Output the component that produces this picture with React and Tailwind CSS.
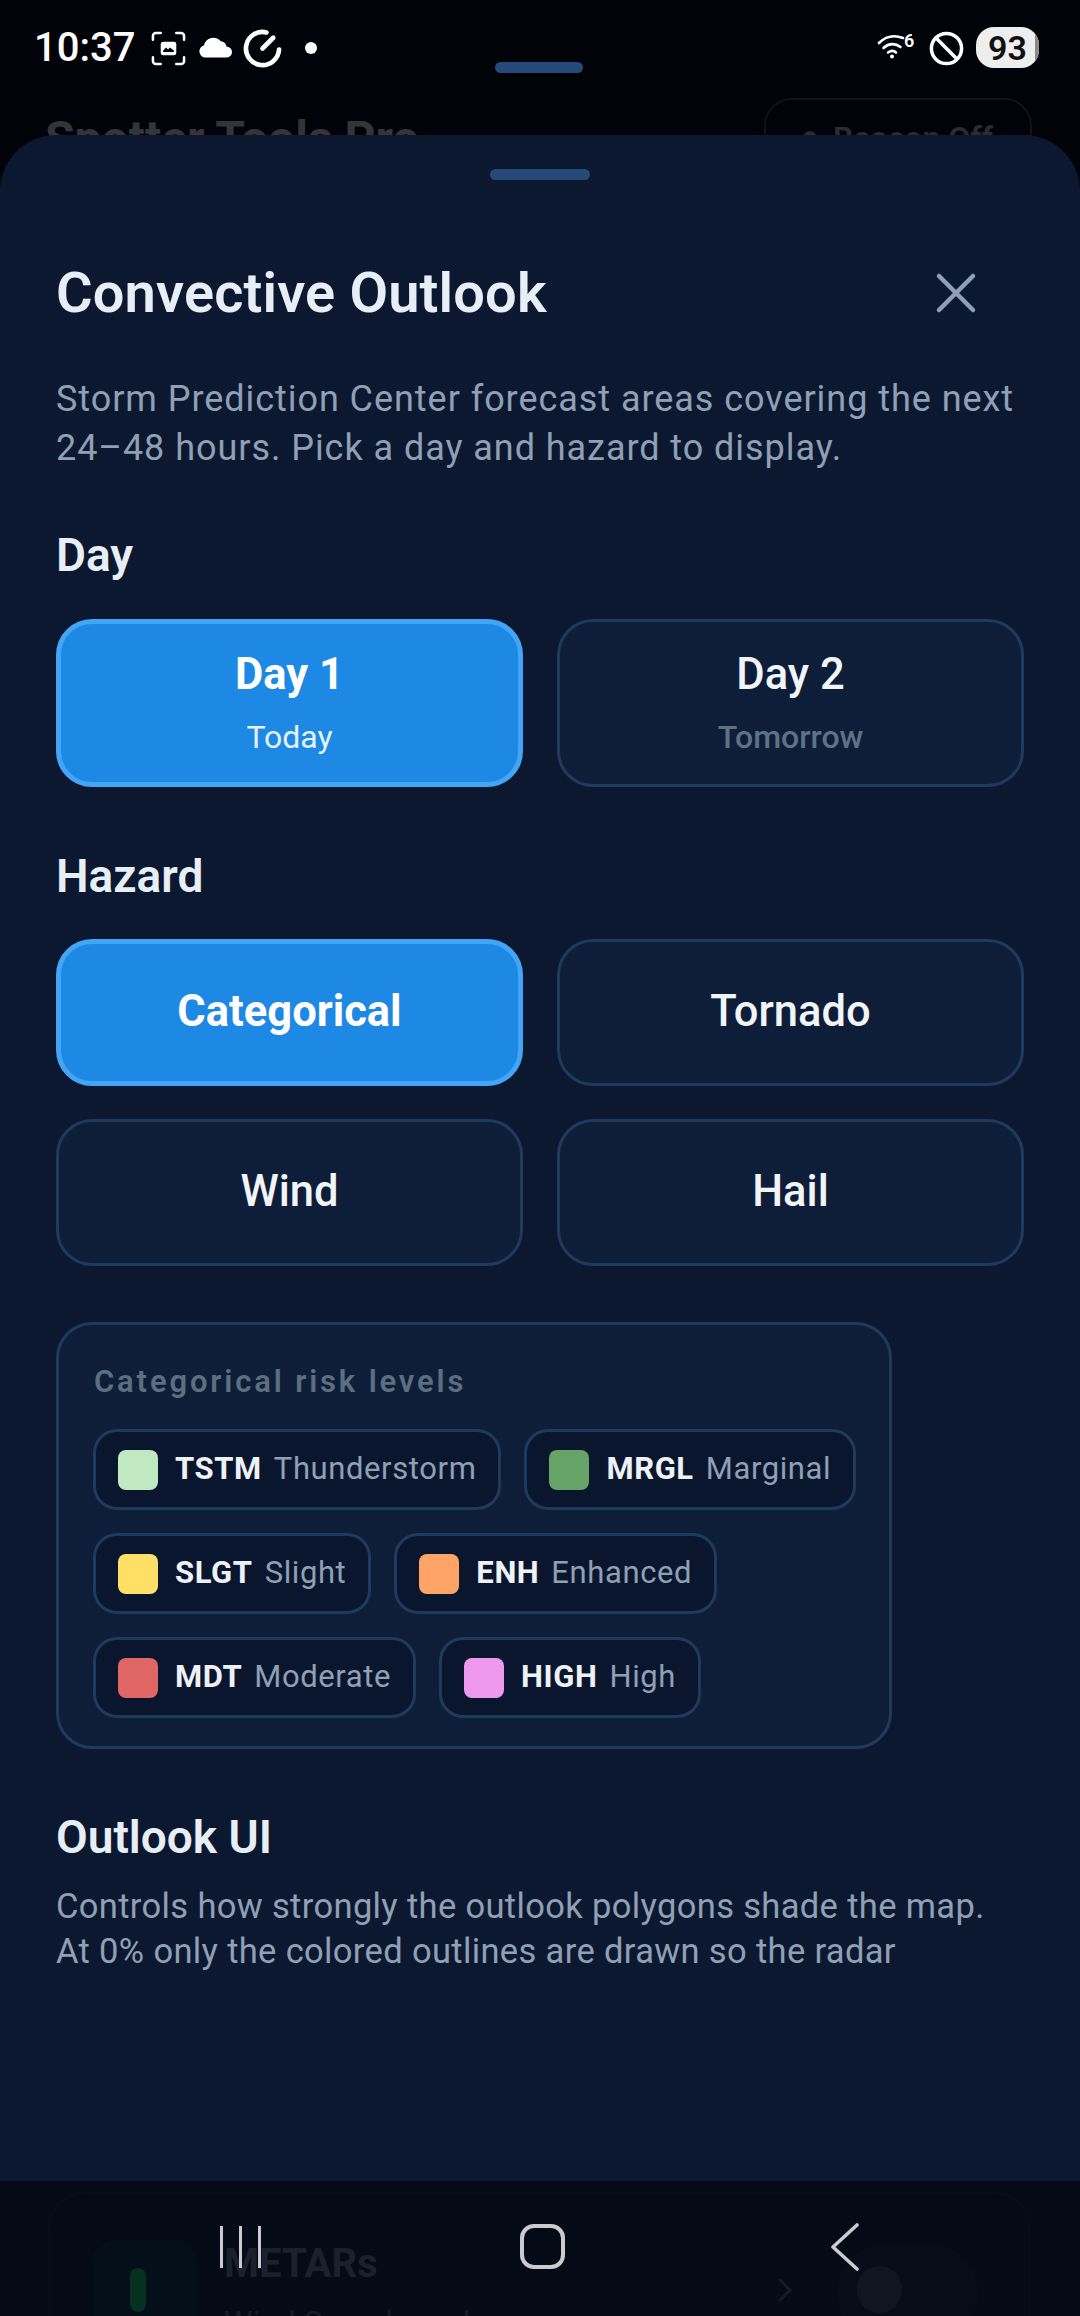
import React from 'react';

const hazards = ['Categorical', 'Tornado', 'Wind', 'Hail'];

const levels = [
  [
    { code: 'TSTM', name: 'Thunderstorm', color: 'bg-[#c1e9c1]' },
    { code: 'MRGL', name: 'Marginal', color: 'bg-[#66a366]' },
  ],
  [
    { code: 'SLGT', name: 'Slight', color: 'bg-[#ffe066]' },
    { code: 'ENH', name: 'Enhanced', color: 'bg-[#ffa366]' },
  ],
  [
    { code: 'MDT', name: 'Moderate', color: 'bg-[#e06666]' },
    { code: 'HIGH', name: 'High', color: 'bg-[#ee99ee]' },
  ],
];

function StatusBar() {
  return (
    <div className="relative h-[135px] shrink-0">
      {/* ghost of the page behind the sheet */}
      <div className="absolute left-[45px] top-[111px] text-[48px] leading-[56px] font-bold text-[#333538]">Spotter Tools Pro</div>
      <div className="absolute left-[764px] top-[98px] w-[268px] h-[80px] rounded-[28px] border-2 border-[#121316] flex items-center justify-center text-[32px] font-semibold text-[#2a2c30]">
        <span className="w-[14px] h-[14px] rounded-full bg-[#2a2c30] mr-[16px]" />
        Beacon Off
      </div>
      <div className="absolute left-[495px] top-[62px] w-[88px] h-[11px] rounded-full bg-[#234a7a]" />

      <div className="absolute left-[34px] top-[25px] text-[40px] leading-[46px] font-medium text-white">10:37</div>
      <svg className="absolute left-[151px] top-[31px]" width="35" height="35" viewBox="0 0 36 36" fill="none" stroke="#fff" strokeWidth="2.600" strokeLinecap="round">
        <path d="M2 9V5a3 3 0 0 1 3-3h5M26 2h5a3 3 0 0 1 3 3v4M34 27v4a3 3 0 0 1-3 3h-5M10 34H5a3 3 0 0 1-3-3v-4" />
        <rect x="10" y="11" width="16" height="14" rx="2.500" fill="#fff" stroke="none" />
        <path d="M12.500 20l3-3 2 2 2-2 4 3v1.500h-11z" fill="#020308" stroke="none" />
      </svg>
      <svg className="absolute left-[198px] top-[37px]" width="36" height="21" viewBox="0 0 36 22" fill="#fff">
        <path d="M7 21.500a6.500 6.500 0 0 1-1.500-12.800A10 10 0 0 1 23 4.500a7 7 0 0 1 6 5.500A5.800 5.800 0 0 1 30 21.500z" />
      </svg>
      <svg className="absolute left-[243px] top-[29px]" width="39" height="39" viewBox="0 0 40 40" fill="none" stroke="#fff" strokeWidth="4.800" strokeLinecap="round">
        <path d="M24 3.500A17 17 0 1 0 37 21" />
        <path d="M20 20l11-11" />
      </svg>
      <div className="absolute left-[305px] top-[42px] w-[12px] h-[12px] rounded-full bg-white" />

      <svg className="absolute left-[877px] top-[33px]" width="30" height="26" viewBox="0 0 30 26" fill="none" stroke="#fff" strokeWidth="2.600" strokeLinecap="round">
        <path d="M2 10C9 3 18 2 26 5" />
        <path d="M6.500 15c5-5 12-5 17-1" />
        <path d="M11 19.500c3-2 6-2 8 0" />
        <circle cx="15" cy="23.500" r="2" fill="#fff" stroke="none" />
      </svg>
      <div className="absolute left-[904px] top-[31px] text-[18px] leading-[20px] font-semibold text-white">6</div>
      <svg className="absolute left-[929px] top-[31px]" width="35" height="35" viewBox="0 0 36 36" fill="none" stroke="#fff" strokeWidth="3.600">
        <circle cx="18" cy="18" r="15.500" />
        <path d="M7 7l22 22" />
      </svg>
      <div className="absolute left-[976px] top-[27px] w-[63px] h-[41px] rounded-[18px] bg-[#eeeeee] overflow-hidden flex items-center justify-center text-[34px] leading-none font-semibold text-[#111]">
        93
        <div className="absolute right-0 top-0 bottom-0 w-[4px] bg-[#8a8a8a]" />
      </div>
    </div>
  );
}

function OptionButton({ active, title, subtitle, tall }) {
  return (
    <button
      className={
        'flex flex-col items-center justify-center rounded-[36px] ' +
        (tall ? 'h-[168px] ' : 'h-[147px] pb-[2px] ') +
        (active ? 'border-[5px] border-[#42a5f5] bg-[#1e88e5]' : 'border-[3px] border-[#1e3a5f] bg-[#0f1e38]')
      }
    >
      <span className={'text-[43.500px] leading-[50px] ' + (tall ? '-mt-[1px] ' : '') + (active ? 'font-bold text-white' : 'font-medium text-[#f1f5f9]')}>{title}</span>
      {subtitle && (
        <span className={'mt-[19px] text-[32px] leading-[36px] ' + (active ? 'text-[#e3f2fd]' : 'font-medium text-[#5f7285]')}>{subtitle}</span>
      )}
    </button>
  );
}

function Chip({ code, name, color }) {
  return (
    <div className="h-[81px] flex items-center pl-[22px] pr-[22px] rounded-[24px] border-[3px] border-[#1e3a5f] bg-[#0a162d]">
      <span className={'w-[40px] h-[40px] rounded-[8px] mr-[17px] ' + color} />
      <span className="text-[31px] font-bold tracking-[0.6px] text-[#eef2f7] mr-[12px]">{code}</span>
      <span className="text-[31px] tracking-[0.6px] text-[#8fa0b5]">{name}</span>
    </div>
  );
}

function NavBar() {
  return (
    <div className="absolute left-0 right-0 bottom-0 h-[135px] bg-[#040b17] overflow-hidden">
      {/* ghost of the page behind the nav bar */}
      <div className="absolute left-[48px] top-[11px] w-[982px] h-[200px] rounded-[36px] border-2 border-[#060e1c]" />
      <div className="absolute left-[93px] top-[59px] w-[103px] h-[103px] rounded-[20px] bg-[#050f1a]" />
      <div className="absolute left-[224px] top-[60px] text-[40px] leading-[46px] font-bold text-[#1b212c]">METARs</div>
      <div className="absolute left-[224px] top-[122px] text-[32px] leading-[38px] text-[#161c26]">Wind Speed · mph</div>
      <div className="absolute left-[130px] top-[87px] w-[16px] h-[44px] rounded-full bg-[#06301f]" />
      <svg className="absolute left-[776px] top-[96px]" width="18" height="26" viewBox="0 0 18 26" fill="none" stroke="#151b26" strokeWidth="3">
        <path d="M3 2l11 11L3 24" />
      </svg>
      <div className="absolute left-[837px] top-[62px] w-[141px] h-[100px] rounded-full bg-[#060d19]" />
      <div className="absolute left-[857px] top-[85px] w-[45px] h-[47px] rounded-full bg-[#10151f]" />

      <div className="absolute left-[220px] top-[45px] flex gap-[16px]">
        <div className="w-[3px] h-[42px] bg-[#c9cbcf]" />
        <div className="w-[3px] h-[42px] bg-[#c9cbcf]" />
        <div className="w-[3px] h-[42px] bg-[#c9cbcf]" />
      </div>
      <div className="absolute left-[520px] top-[43px] w-[45px] h-[45px] rounded-[14px] border-[4px] border-[#c9cbcf]" />
      <svg className="absolute left-[829px] top-[42px]" width="32" height="48" viewBox="0 0 32 48" fill="none" stroke="#c9cbcf" strokeWidth="3.600" strokeLinecap="round" strokeLinejoin="round">
        <path d="M28 2L4 24l24 22" />
      </svg>
    </div>
  );
}

export default function App() {
  return (
    <div className="relative w-[1080px] h-[2316px] overflow-hidden flex flex-col bg-[#020308] font-['Roboto',sans-serif]">
      <StatusBar />

      <div className="relative flex-1 rounded-t-[56px] bg-[#0c1830] px-[56px] overflow-hidden">
        <div className="mx-auto mt-[34px] w-[100px] h-[11px] rounded-full bg-[#254a78]" />

        <div className="mt-[83px] flex items-center justify-between h-[60px]">
          <h1 className="text-[56px] leading-[60px] font-semibold tracking-[0.15px] text-[#e8eef5]">Convective Outlook</h1>
          <svg className="mr-[46px]" width="44" height="44" viewBox="0 0 44 44" fill="none" stroke="#8fa0b5" strokeWidth="4.500" strokeLinecap="round">
            <path d="M5 5l34 34M39 5L5 39" />
          </svg>
        </div>

        <p className="mt-[52px] text-[36px] leading-[49px] tracking-[0.95px] text-[#8fa0b5]">
          Storm Prediction Center forecast areas covering the next 24–48 hours. Pick a day and hazard to display.
        </p>

        <h2 className="mt-[57px] text-[46px] leading-[50px] font-semibold text-[#e8eef5]">Day</h2>
        <div className="mt-[39px] grid grid-cols-2 gap-[34px]">
          <OptionButton tall active title="Day 1" subtitle="Today" />
          <OptionButton tall title="Day 2" subtitle="Tomorrow" />
        </div>

        <h2 className="mt-[64px] text-[46px] leading-[50px] font-semibold text-[#e8eef5]">Hazard</h2>
        <div className="mt-[38px] grid grid-cols-2 gap-x-[34px] gap-y-[33px]">
          {hazards.map((h, i) => (
            <OptionButton key={h} active={i === 0} title={h} />
          ))}
        </div>

        <div className="mt-[56px] w-[836px] h-[427px] rounded-[36px] border-[3px] border-[#1e3a5f] bg-[#0f1e38] pl-[34px] pt-[40px]">
          <div className="text-[31px] leading-[34px] font-semibold tracking-[2.850px] text-[#5b6f80] pl-[1px]">Categorical risk levels</div>
          <div className="mt-[30px] flex flex-col gap-[23px]">
            {levels.map((row, i) => (
              <div key={i} className="flex gap-[23px]">
                {row.map((l) => (
                  <Chip key={l.code} {...l} />
                ))}
              </div>
            ))}
          </div>
        </div>

        <h2 className="mt-[63px] text-[46px] leading-[50px] font-semibold text-[#e8eef5]">Outlook UI</h2>
        <p className="mt-[22px] text-[34.500px] leading-[45px] tracking-[0.35px] text-[#8fa0b5]">
          Controls how strongly the outlook polygons shade the map.<br />
          At 0% only the colored outlines are drawn so the radar
        </p>
      </div>

      <NavBar />
    </div>
  );
}
